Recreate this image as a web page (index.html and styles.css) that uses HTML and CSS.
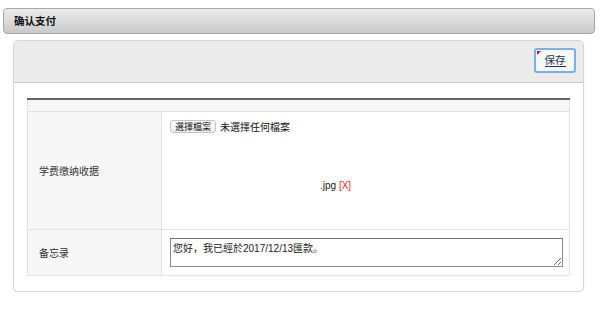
FILE: index.html
```html
<!DOCTYPE html>
<html lang="zh">
<head>
  <meta charset="UTF-8">
  <title>确认支付</title>
  <link rel="stylesheet" href="styles.css">
</head>
<body>
  <div class="page">
    <div class="title-bar">确认支付</div>

    <div class="panel">
      <div class="panel-head">
        <button class="save-btn"><span class="save-text">保存</span></button>
      </div>

      <div class="panel-body">
        <table class="form-table">
          <colgroup>
            <col class="col-label">
            <col>
          </colgroup>
          <thead>
            <tr><th colspan="2"></th></tr>
          </thead>
          <tbody>
            <tr class="row-file">
              <td class="label">学费缴纳收据</td>
              <td class="field">
                <div class="file-line">
                  <span class="file-btn">選擇檔案</span>
                  <span class="file-none">未選擇任何檔案</span>
                </div>
                <div class="file-name">.jpg <a href="#" class="remove">[X]</a></div>
              </td>
            </tr>
            <tr class="row-memo">
              <td class="label">备忘录</td>
              <td class="field">
                <textarea class="memo">您好，我已經於2017/12/13匯款。</textarea>
              </td>
            </tr>
          </tbody>
        </table>
      </div>
    </div>
  </div>
</body>
</html>
```

FILE: styles.css
```css
* {
  box-sizing: border-box;
}

body {
  margin: 0;
  background: #fff;
  color: #222;
  font-family: 'Liberation Sans', 'Noto Sans CJK TC', sans-serif;
  font-size: 10px;
}

.page {
  padding: 8px 5px 0 3px;
}

.title-bar {
  height: 26px;
  line-height: 25px;
  padding-left: 10px;
  font-size: 10.5px;
  font-weight: bold;
  color: #111;
  border: 1px solid #a8a8a8;
  border-radius: 4px;
  background: linear-gradient(to bottom, #ececec, #c9c9c9);
}

.panel {
  margin: 6px 11px 0 10px;
  border: 1px solid #d6d6d6;
  border-radius: 5px;
  background: #fff;
  box-shadow: 0 1px 2px rgba(0,0,0,0.08);
}

.panel-head {
  display: flex;
  justify-content: flex-end;
  height: 42px;
  padding: 7px 7px 0 0;
  background: #ebebeb;
  border-bottom: 1px solid #c9c9c9;
  border-radius: 4px 4px 0 0;
}

.save-btn {
  position: relative;
  width: 42px;
  height: 25px;
  padding: 0;
  background: #f7f7f7;
  border: 2px solid #78b0ee;
  border-radius: 3px;
  font-family: 'Noto Sans CJK TC', sans-serif;
  font-size: 10.5px;
  line-height: 12px;
  color: #1d3557;
}

.save-text {
  display: inline-block;
  border-bottom: 1px solid #1d3557;
}

.save-btn::before {
  content: '';
  position: absolute;
  top: 1px;
  left: 1px;
  border-top: 4px solid #b3132b;
  border-right: 4px solid transparent;
}

.panel-body {
  padding: 15px 13px 15px 13px;
}

.form-table {
  width: 100%;
  table-layout: fixed;
  border-collapse: collapse;
  border-top: 2px solid #666;
}

.col-label {
  width: 134px;
}

.form-table th {
  height: 12px;
  padding: 0;
  background: #f6f6f6;
  border: 1px solid #e2e2e2;
  border-top: none;
}

.form-table td {
  border: 1px solid #e2e2e2;
  vertical-align: top;
}

.form-table td.label {
  padding-left: 11px;
  vertical-align: middle;
  background: #f7f7f7;
  color: #333;
}

.row-file td {
  height: 118px;
}

.row-memo td {
  height: 46px;
}

.field {
  padding: 7px 6px 0 8px;
}

.file-line {
  display: flex;
  align-items: center;
  gap: 4px;
}

.file-btn {
  display: inline-block;
  padding: 0 4px;
  height: 13px;
  line-height: 12px;
  font-size: 9px;
  border: 1px solid #c4c4c4;
  border-radius: 3px;
  background: linear-gradient(to bottom, #fff, #ededed);
  color: #111;
}

.file-none {
  color: #111;
}

.file-name {
  margin: 46px 0 0 150px;
  font-size: 10px;
  color: #222;
}

.remove {
  color: #ff1a1a;
  text-decoration: none;
}

.row-memo .field {
  padding-top: 8px;
}

.memo {
  display: block;
  width: 100%;
  height: 29px;
  padding: 1px 2px;
  resize: vertical;
  border: 1px solid #8a8a8a;
  border-top-color: #707070;
  font-family: 'Liberation Sans', 'Noto Sans CJK TC', sans-serif;
  font-size: 10px;
  color: #222;
}
```
